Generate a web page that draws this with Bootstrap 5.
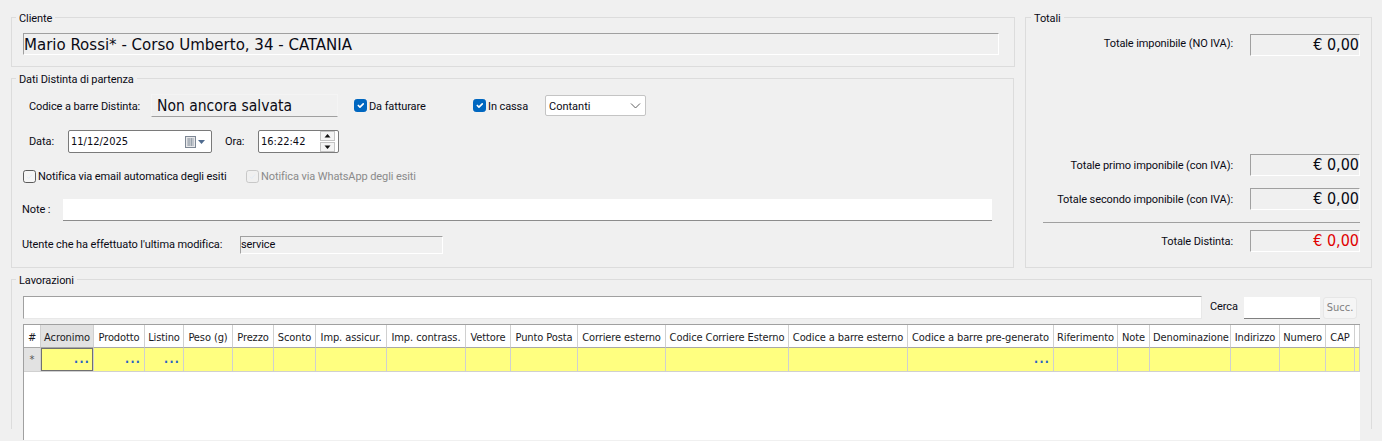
<!DOCTYPE html>
<html lang="it">
<head>
<meta charset="utf-8">
<title>Distinta</title>
<link href="https://cdn.jsdelivr.net/npm/bootstrap@5.3.0/dist/css/bootstrap.min.css" rel="stylesheet">
<style>
html,body{height:441px;overflow:hidden}
body{background:#f0f0f0;color:#0a0a14;font-family:Roboto,sans-serif;font-size:11px;line-height:14px;letter-spacing:-.1px;padding:11px 10px 0 11px}
.cond{font-family:"DejaVu Sans",sans-serif;font-stretch:condensed;letter-spacing:0}
.gbox{border:1px solid #dcdcdc;margin:0;padding:0;min-width:0}
.gbox>legend{float:none;width:auto;font-size:11px;line-height:11px;margin:0 0 0 5px;padding:2px 3px 0;color:#0a0a14}
.col-left{width:1004px}
.col-right{width:347px;margin-left:10px}
.box-cliente{height:56px;padding-left:11px}
.box-cliente>legend{margin-left:-7px}
.box-dati{height:196px;margin-top:5px;width:1003px;padding-left:10px}
.box-dati>legend{margin-left:-6px}
.box-totali{height:257px}
.box-lav{height:156px;margin-top:5px;padding:0 11px;width:1361px;border-bottom:0}
.box-lav>legend{margin-left:-7px}
.ro{background:#f0f0f0;border-style:solid;border-width:1px;border-color:#a0a0a0 #fff #fff #a0a0a0;display:flex;align-items:center;overflow:hidden;white-space:nowrap}
.ro-cliente{height:22px;font-size:16.7px;margin-top:9px;width:976px}
.ro-code{width:187px;height:23px;font-size:15.5px;padding-left:5px;border-color:#f4f4f4 #f4f4f4 #a0a0a0 #f4f4f4;margin-right:16px}
.ro-user{width:203px;height:18px}
.ro-tot{width:110px;height:22px;font-size:16px;justify-content:flex-end;margin-left:17px}
.rowx{display:flex;align-items:center}
.r1{height:23px;margin:9px 0 0 7px}
.r1>span,.r3>span{padding-top:2px}
.r2{height:23px;margin-top:13px;margin-left:7px}
.r3{height:14px;margin-top:16px;margin-left:1px}
.r4{height:22px;margin-top:16px}
.r5{height:18px;margin-top:15px}
.w-code{width:122px}
.w-fatt{width:104px}
.w-cassa{width:57px}
.w-data{width:39px}
.w-ora{width:33px;margin-left:13px}
.w-mail{width:208px}
.w-note{width:41px}
.w-user{width:218px}
.ck{--bs-form-check-bg-image:url("data:image/svg+xml,%3csvg xmlns='http://www.w3.org/2000/svg' viewBox='0 0 13 13'%3e%3cpath fill='none' stroke='%23dfeaf6' stroke-width='1' d='M3.500 6.800l2 2 4-4.500'/%3e%3c/svg%3e");margin:0 2px 0 0!important;width:13px;height:13px;border:1px solid #5c5c5c;border-radius:3px;background-color:#f5f5f5;flex:none;float:none!important;box-shadow:none!important}
.ck:checked{background-color:#0067c0;border-color:#0067c0}
.ck:disabled{opacity:1;border-color:#c8c8c8;background-color:#f0f0f0}
.lab-dis{color:#8a8a8a}
.sel{--bs-form-select-bg-img:url("data:image/svg+xml,%3csvg xmlns='http://www.w3.org/2000/svg' viewBox='0 0 11 9'%3e%3cpath fill='none' stroke='%23606060' stroke-width='1' d='M1 2.500l4.500 4.500 4.500-4.500'/%3e%3c/svg%3e");width:101px;height:21px;min-height:0;font-size:11px;line-height:14px;padding:3px 20px 1px 3px;border:1px solid #c4c4c4;border-radius:2px;color:#0a0a14;background-size:11px 9px;background-position:right 4px center;box-shadow:none}
.datebox{width:144px;height:23px;background:#fff;border:1px solid #7a7a7a;border-radius:2px;padding:0 5px 0 2px;justify-content:space-between}
.timebox{width:81px;height:23px;background:#fff;border:1px solid #7a7a7a;border-radius:2px;padding:0 3px 0 2px;justify-content:space-between}
.spin{width:15px;display:flex;flex-direction:column;gap:1px}
.spin svg{display:block;background:#f4f4f4;border:1px solid #c4c4c4}
.note-in{width:929px;height:22px;background:#fff;border:0;border-bottom:1px solid #8c8c8c}
.tot-row{justify-content:flex-end;height:22px;padding-right:11px}
.tot-row>span{padding-top:2px}
.tot-row.t1>span{padding-top:0;padding-bottom:2px}
.t1{margin-top:10px}.t2{margin-top:98px}.t3{margin-top:12px}.t4{margin-top:7px}
.tot-sep{border-top:1px solid #a0a0a0;margin:12px 11px 0 17px}
.cred{color:#e00000}
.search-row{height:23px;margin-top:10px}
.search-in{width:1179px;height:23px;background:#fff;border:1px solid #a0a0a0;border-right-color:#e8e8e8;border-bottom-color:#e8e8e8}
.search-lab{margin-left:8px;width:34px;padding-bottom:2px}
.search-box{width:76px;height:22px;background:#fff;border:0;border-bottom:1px solid #808080}
.succ{width:34px;height:22px;font-size:11px;line-height:14px;padding:0;margin-left:3px;--bs-btn-disabled-bg:#f5f5f5;--bs-btn-disabled-border-color:#e6e6e6;--bs-btn-disabled-color:#808080;--bs-btn-disabled-opacity:1;border-radius:3px}
.gridx{margin-top:5px;width:1337px;height:116px;background:#fff;border-top:1px solid #a0a0a0;border-left:1px solid #a0a0a0}
.gridx table{table-layout:fixed;border-collapse:separate;border-spacing:0;width:1336px;margin:0;--bs-table-bg:transparent}
.gridx th,.gridx td{padding:0 3px;border:0;border-right:1px solid #d0d0d0;font-weight:400;white-space:nowrap;overflow:hidden;color:#1a1a24}
.gridx th{height:23px;padding-top:4px;background:#fff;border-bottom:1px solid #a8a8a8;text-align:center;vertical-align:middle;letter-spacing:-.1px}
.gridx td{height:24px;background:#ffff80;border-bottom:1px solid #d0d0d0;text-align:right;vertical-align:middle}
.gridx th.act{background:#e2e2e2}
.gridx td.rowh{background:#e2e2e2;text-align:center;color:#555;padding:0}
.gridx td.cur{box-shadow:inset 0 0 0 1px #707070}
.dots{color:#2a62c4;letter-spacing:1.2px;line-height:10px;font-size:12px;font-weight:700}
</style>
</head>
<body>
<div class="d-flex">
  <div class="col-left">
    <fieldset class="gbox box-cliente">
      <legend>Cliente</legend>
      <div class="ro ro-cliente cond">Mario Rossi* - Corso Umberto, 34 - CATANIA</div>
    </fieldset>
    <fieldset class="gbox box-dati">
      <legend>Dati Distinta di partenza</legend>
      <div class="rowx r1">
        <span class="w-code">Codice a barre Distinta:</span>
        <div class="ro ro-code cond">Non ancora salvata</div>
        <input class="form-check-input ck" type="checkbox" checked aria-label="Da fatturare"><span class="w-fatt">Da fatturare</span>
        <input class="form-check-input ck" type="checkbox" checked aria-label="In cassa"><span class="w-cassa">In cassa</span>
        <select class="form-select sel" aria-label="Pagamento"><option>Contanti</option></select>
      </div>
      <div class="rowx r2">
        <span class="w-data">Data:</span>
        <div class="rowx datebox cond"><span>11/12/2025</span>
          <svg width="21" height="12" viewBox="0 0 21 12"><rect x="0.500" y="0.500" width="10" height="11" fill="#e8e8ea" stroke="#7d8794"/><path d="M2 3h7M2 5h7M2 7h7M2 9h7M4 2v8M6.500 2v8" stroke="#9aa3ad" stroke-width="1"/><path d="M13 4h7l-3.500 4z" fill="#4f6b8f"/></svg>
        </div>
        <span class="w-ora">Ora:</span>
        <div class="rowx timebox cond"><span>16:22:42</span>
          <div class="spin">
            <svg width="15" height="10" viewBox="0 0 13 8"><path d="M3.500 5.500h6L6.500 2z" fill="#111"/></svg>
            <svg width="15" height="10" viewBox="0 0 13 8"><path d="M3.500 2.500h6L6.500 6z" fill="#111"/></svg>
          </div>
        </div>
      </div>
      <div class="rowx r3">
        <input class="form-check-input ck" type="checkbox" aria-label="Notifica email"><span class="w-mail">Notifica via email automatica degli esiti</span>
        <input class="form-check-input ck" type="checkbox" disabled aria-label="Notifica WhatsApp"><span class="lab-dis">Notifica via WhatsApp degli esiti</span>
      </div>
      <div class="rowx r4"><span class="w-note">Note :</span><div class="note-in"></div></div>
      <div class="rowx r5"><span class="w-user">Utente che ha effettuato l'ultima modifica:</span><div class="ro ro-user">service</div></div>
    </fieldset>
  </div>
  <div class="col-right">
    <fieldset class="gbox box-totali">
      <legend>Totali</legend>
      <div class="rowx tot-row t1"><span>Totale imponibile (NO IVA):</span><div class="ro ro-tot cond">€ 0,00</div></div>
      <div class="rowx tot-row t2"><span>Totale primo imponibile (con IVA):</span><div class="ro ro-tot cond">€ 0,00</div></div>
      <div class="rowx tot-row t3"><span>Totale secondo imponibile (con IVA):</span><div class="ro ro-tot cond">€ 0,00</div></div>
      <div class="tot-sep"></div>
      <div class="rowx tot-row t4"><span>Totale Distinta:</span><div class="ro ro-tot cond cred">€ 0,00</div></div>
    </fieldset>
  </div>
</div>
<fieldset class="gbox box-lav">
  <legend>Lavorazioni</legend>
  <div class="rowx search-row">
    <div class="search-in"></div>
    <span class="search-lab">Cerca</span>
    <div class="search-box"></div>
    <button class="btn succ cond" type="button" disabled>Succ.</button>
  </div>
  <div class="gridx cond">
    <table class="table">
      <colgroup>
        <col style="width:17px"><col style="width:53px"><col style="width:51px"><col style="width:39px"><col style="width:49px"><col style="width:41px"><col style="width:42px"><col style="width:71px"><col style="width:79px"><col style="width:45px"><col style="width:67px"><col style="width:88px"><col style="width:123px"><col style="width:119px"><col style="width:146px"><col style="width:64px"><col style="width:32px"><col style="width:81px"><col style="width:49px"><col style="width:46px"><col style="width:29px"><col>
      </colgroup>
      <thead><tr>
        <th>#</th><th class="act">Acronimo</th><th>Prodotto</th><th>Listino</th><th>Peso (g)</th><th>Prezzo</th><th>Sconto</th><th>Imp. assicur.</th><th>Imp. contrass.</th><th>Vettore</th><th>Punto Posta</th><th>Corriere esterno</th><th>Codice Corriere Esterno</th><th>Codice a barre esterno</th><th>Codice a barre pre-generato</th><th>Riferimento</th><th>Note</th><th>Denominazione</th><th>Indirizzo</th><th>Numero</th><th>CAP</th><th></th>
      </tr></thead>
      <tbody><tr>
        <td class="rowh">*</td><td class="cur"><span class="dots">...</span></td><td><span class="dots">...</span></td><td><span class="dots">...</span></td><td></td><td></td><td></td><td></td><td></td><td></td><td></td><td></td><td></td><td></td><td><span class="dots">...</span></td><td></td><td></td><td></td><td></td><td></td><td></td><td></td>
      </tr></tbody>
    </table>
  </div>
</fieldset>
<script src="https://cdn.jsdelivr.net/npm/bootstrap@5.3.0/dist/js/bootstrap.bundle.min.js"></script>
</body>
</html>
